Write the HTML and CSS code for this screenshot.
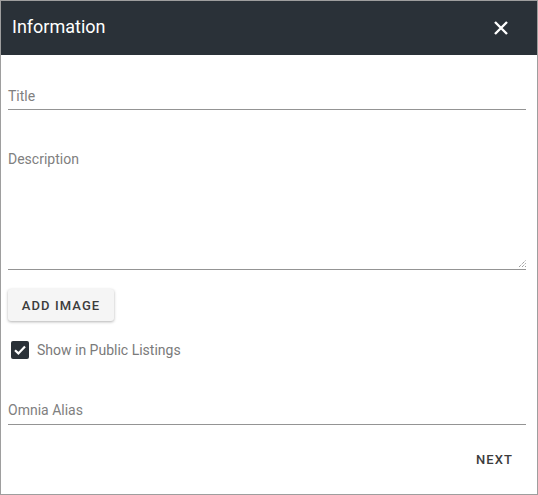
FILE: index.html
```html
<!DOCTYPE html>
<html>
<head>
<meta charset="utf-8">
<link rel="stylesheet" href="styles.css">
</head>
<body>
<div class="dialog">
  <div class="header">
    <span class="title">Information</span>
    <svg class="close" width="16" height="16" viewBox="0 0 16 16"><path d="M2 2 L14 14 M14 2 L2 14" stroke="#fff" stroke-width="2.4" fill="none"/></svg>
  </div>
  <div class="content">
    <div class="field field-title"><span class="label">Title</span></div>
    <div class="field field-desc">
      <span class="label">Description</span>
      <svg class="grip" width="8" height="8" viewBox="0 0 8 8"><path d="M1 8 L8 1 M4 8 L8 4 M7 8 L8 7" stroke="#777" stroke-width="1" stroke-dasharray="1 1" fill="none"/></svg>
    </div>
    <button class="btn-add">ADD IMAGE</button>
    <label class="check-row">
      <span class="box"><svg width="18" height="18" viewBox="0 0 18 18"><path d="M4 9.2 L7.4 12.4 L14 5.6" stroke="#fff" stroke-width="2.2" fill="none"/></svg></span>
      <span class="check-label">Show in Public Listings</span>
    </label>
    <div class="field field-alias"><span class="label">Omnia Alias</span></div>
    <div class="actions"><button class="btn-next">NEXT</button></div>
  </div>
</div>
</body>
</html>
```

FILE: styles.css
```css
* { box-sizing: border-box; }
html, body { margin: 0; padding: 0; background: #fff; }
body { font-family: Roboto, "Noto Sans", sans-serif; }
.dialog {
  width: 538px;
  height: 495px;
  border: 1px solid #9e9e9e;
  display: flex;
  flex-direction: column;
}
.header {
  height: 54px;
  flex-shrink: 0;
  background: #2a3138;
  display: flex;
  align-items: center;
  justify-content: space-between;
  padding: 0 28px 4px 11px;
}
.title { color: #fff; font-size: 18px; font-weight: 400; }
.close { display: block; margin-top: 4px; }
.content {
  flex: 1;
  padding: 0 11px 0 7px;
  display: flex;
  flex-direction: column;
}
.field {
  border-bottom: 1px solid #949494;
  position: relative;
  flex-shrink: 0;
}
.label { color: #808080; font-size: 14px; display: block; padding-top: 1px; }
.field-title { margin-top: 32px; height: 23px; }
.field-desc { margin-top: 41px; height: 119px; }
.field-desc .label { padding-top: 0; }
.field-alias .label { padding-top: 3px; }
.grip { position: absolute; right: 0; bottom: 2px; }
.btn-add {
  align-self: flex-start;
  flex-shrink: 0;
  margin-top: 19px;
  width: 106px;
  height: 32px;
  border: none;
  border-radius: 3px;
  background: #f5f5f5;
  box-shadow: 0 1px 3px rgba(0,0,0,0.3);
  font-family: Roboto, sans-serif;
  font-size: 13px;
  font-weight: 500;
  letter-spacing: 1.1px;
  color: #3c3c3c;
  padding: 0;
}
.check-row {
  display: flex;
  align-items: center;
  margin-top: 20px;
  padding-left: 3px;
  height: 18px;
  flex-shrink: 0;
}
.box {
  width: 18px; height: 18px;
  background: #2a3138;
  border-radius: 2px;
  display: block;
}
.box svg { display: block; }
.check-label { margin-left: 8px; color: #7a7a7a; font-size: 14px; }
.field-alias { margin-top: 40px; height: 26px; }
.actions { display: flex; justify-content: flex-end; margin-top: 27px; padding-right: 13px; }
.btn-next {
  border: none; background: none; padding: 0;
  font-family: Roboto, sans-serif;
  font-size: 13px;
  font-weight: 500;
  letter-spacing: 1.1px;
  color: #3c3c3c;
}
```
